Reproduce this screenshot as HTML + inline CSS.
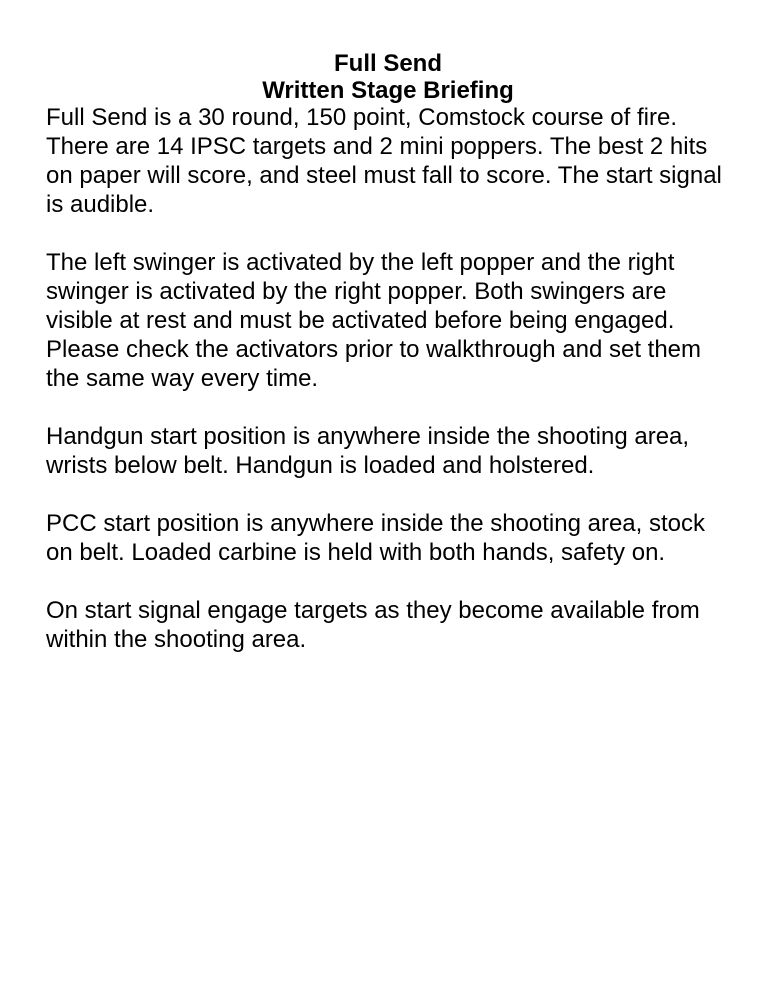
<!DOCTYPE html>
<html><head><meta charset="utf-8"><style>
html,body{margin:0;padding:0;background:#fff;width:768px;height:1008px;overflow:hidden}
body{font-family:"Liberation Sans",Arial,sans-serif;color:#000;position:relative}
.t{position:absolute;left:0;width:776px;top:50px;text-align:center;font-weight:bold;font-size:24px;line-height:27px}
.b{position:absolute;left:46px;top:103px;font-size:24px;line-height:29px;white-space:nowrap}
</style></head><body>
<div class="t">Full Send<br>Written Stage Briefing</div>
<div class="b">Full Send is a 30 round, 150 point, Comstock course of fire.<br>There are 14 IPSC targets and 2 mini poppers. The best 2 hits<br>on paper will score, and steel must fall to score. The start signal<br>is audible.<br><br>The left swinger is activated by the left popper and the right<br>swinger is activated by the right popper. Both swingers are<br>visible at rest and must be activated before being engaged.<br>Please check the activators prior to walkthrough and set them<br>the same way every time.<br><br>Handgun start position is anywhere inside the shooting area,<br>wrists below belt. Handgun is loaded and holstered.<br><br>PCC start position is anywhere inside the shooting area, stock<br>on belt. Loaded carbine is held with both hands, safety on.<br><br>On start signal engage targets as they become available from<br>within the shooting area.</div>
</body></html>
